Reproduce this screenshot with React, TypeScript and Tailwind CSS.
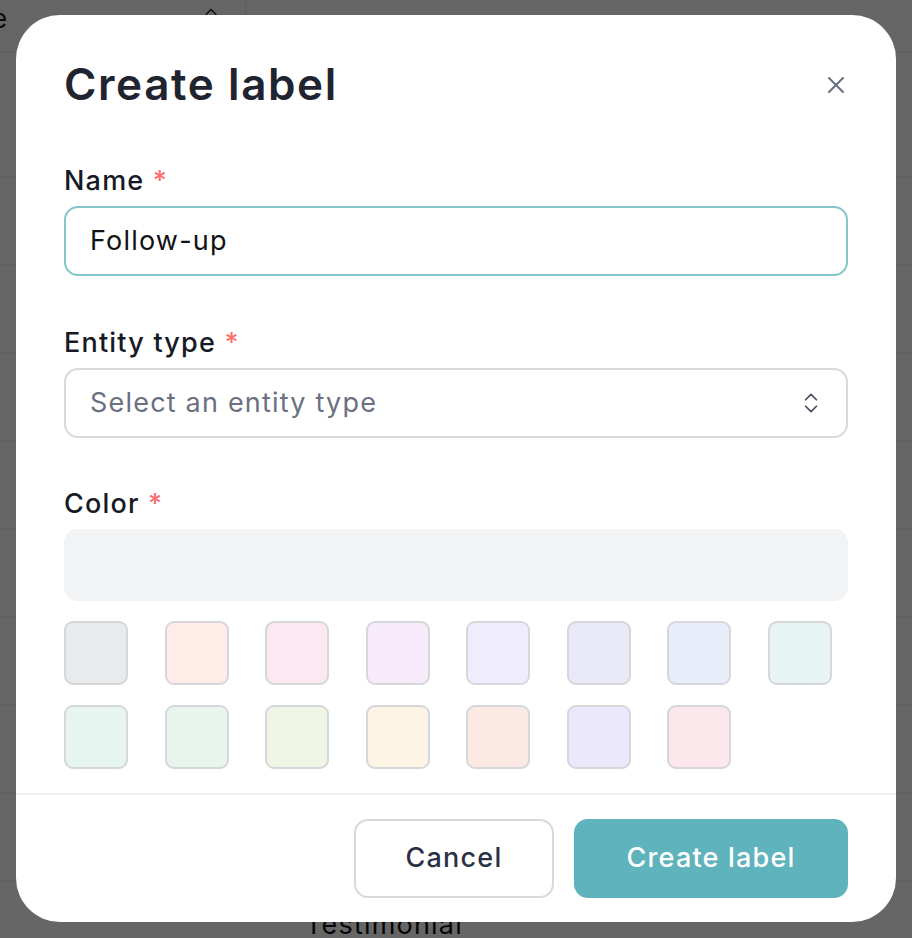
import { X, ChevronsUpDown, ChevronUp } from 'lucide-react';

const swatches = [
  '#e9eaec', '#ffebe8', '#fbe8f0', '#f6eafb', '#efecfd', '#eae9f8', '#e7eefa', '#e6f4f4',
  '#e6f5f0', '#e8f5ec', '#f0f6e6', '#fdf4e6', '#fbeae3', '#ece8fb', '#fbe7ec',
];

const rows = ['', '', '', '', '', '', '', '', 'Testimonial'];

export default function App() {
  return (
    <div className="relative h-[938px] w-[912px] overflow-hidden bg-white font-['Inter',sans-serif]">
      {/* tabla detrás del modal */}
      <div className="flex h-[53px] border-b-2 border-[#f2f2f2]">
        <div className="flex w-[247px] items-start justify-between border-r-2 border-[#f2f2f2] pr-[24px] text-[26px] leading-none tracking-[1px] text-[#222]">
          <span className="-ml-[8px] mt-[6px]">e</span>
          <ChevronUp className="mt-[2px] size-5 text-[#333]" />
        </div>
      </div>
      <div className="h-[125px] border-b-2 border-[#f2f2f2]" />
      {rows.map((r, i) => (
        <div key={i} className="flex h-[88px] items-center border-b-2 border-[#f2f2f2] pl-[305px] text-[27px] tracking-[1.2px] text-[#111]">
          {r}
        </div>
      ))}

      <div className="absolute inset-0 bg-black/60" />

      {/* modal */}
      <div className="absolute left-[16px] top-[15px] flex h-[907px] w-[880px] flex-col rounded-[44px] bg-white tracking-[1.2px]">
        <div className="flex-1 px-[48px] pt-[47px]">
          <div className="flex h-[44px] items-center justify-between">
            <h1 className="text-[44px] font-semibold leading-none tracking-[1.6px] text-[#1f2430]">Create label</h1>
            <X className="mr-[-2px] mt-[2px] size-[28px] text-[#6b7080]" strokeWidth={1.75} />
          </div>

          <label className="mt-[61px] block h-[27px] text-[27px] font-medium leading-none text-[#161a26]">
            Name <span className="text-[#f87171]">*</span>
          </label>
          <div className="mt-[12px] flex h-[70px] items-center rounded-[14px] border-2 border-[#84c5ca] px-[24px] text-[27px] text-[#111]">
            Follow-up
          </div>

          <label className="mt-[53px] block h-[27px] text-[27px] font-medium leading-none text-[#161a26]">
            Entity type <span className="text-[#f87171]">*</span>
          </label>
          <div className="mt-[12px] flex h-[70px] items-center justify-between rounded-[14px] border-2 border-[#d8d9dc] pl-[24px] pr-[22px] text-[27px] text-[#6b7080]">
            <span>Select an entity type</span>
            <ChevronsUpDown className="size-[26px] text-[#4b5060]" strokeWidth={1.6} />
          </div>

          <label className="mt-[52px] block h-[27px] text-[27px] font-medium leading-none text-[#161a26]">
            Color <span className="text-[#f87171]">*</span>
          </label>
          <div className="mt-[12px] h-[72px] rounded-[14px] bg-[#f2f3f5]" />

          <div className="mt-[20px] flex w-[784px] flex-wrap gap-x-[36.5px] gap-y-[20px]">
            {swatches.map((c) => (
              <div
                key={c}
                className="size-[64px] rounded-[9px] border-2 border-[#d5d7da]"
                style={{ backgroundColor: c }}
              />
            ))}
          </div>
        </div>

        <div className="flex justify-end gap-[20px] border-t-2 border-[#eef0f2] px-[48px] pb-[24px] pt-[24px]">
          <button className="h-[79px] w-[200px] rounded-[14px] border-2 border-[#d8d9dc] bg-white text-[27px] font-medium text-[#2b3145]">
            Cancel
          </button>
          <button className="h-[79px] w-[274px] rounded-[14px] bg-[#5fb3bc] text-[27px] font-medium text-white">
            Create label
          </button>
        </div>
      </div>
    </div>
  );
}
